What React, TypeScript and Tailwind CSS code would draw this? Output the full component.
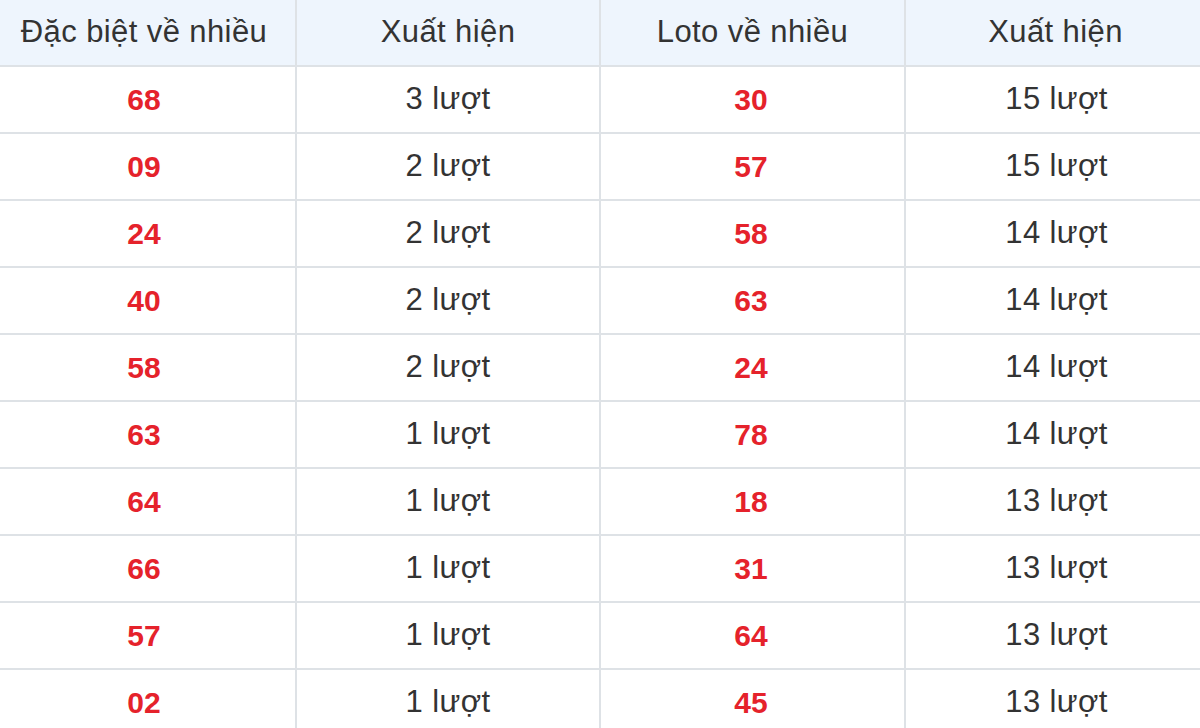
import React from "react";

const rows: [string, string, string, string][] = [
  ["68", "3 lượt", "30", "15 lượt"],
  ["09", "2 lượt", "57", "15 lượt"],
  ["24", "2 lượt", "58", "14 lượt"],
  ["40", "2 lượt", "63", "14 lượt"],
  ["58", "2 lượt", "24", "14 lượt"],
  ["63", "1 lượt", "78", "14 lượt"],
  ["64", "1 lượt", "18", "13 lượt"],
  ["66", "1 lượt", "31", "13 lượt"],
  ["57", "1 lượt", "64", "13 lượt"],
  ["02", "1 lượt", "45", "13 lượt"],
];

export default function App() {
  return (
    <div className="w-[1200px] h-[728px] overflow-hidden bg-white" style={{ fontFamily: '"Liberation Sans", Arial, sans-serif' }}>
      <table className="border-collapse w-[1200px] table-fixed">
        <colgroup>
          <col className="w-[296px]" />
          <col className="w-[304px]" />
          <col className="w-[305px]" />
          <col className="w-[295px]" />
        </colgroup>
        <thead>
          <tr className="bg-[#eef5fd] h-[66px]">
            <th className="border-2 border-t-0 border-l-0 border-[#dee2e6] text-[31px] tracking-[0.4px] font-normal text-[#333333] text-center p-0 pr-[7px]">Đặc biệt về nhiều</th>
            <th className="border-2 border-t-0 border-[#dee2e6] text-[31px] tracking-[0.4px] font-normal text-[#333333] text-center p-0">Xuất hiện</th>
            <th className="border-2 border-t-0 border-[#dee2e6] text-[31px] tracking-[0.4px] font-normal text-[#333333] text-center p-0">Loto về nhiều</th>
            <th className="border-2 border-t-0 border-r-0 border-[#dee2e6] text-[31px] tracking-[0.4px] font-normal text-[#333333] text-center p-0 pl-[5px]">Xuất hiện</th>
          </tr>
        </thead>
        <tbody>
          {rows.map((r, i) => (
            <tr key={i} className="h-[67px]">
              <td className="border-2 border-l-0 border-[#dee2e6] text-center text-[30px] font-bold text-[#e5222b] p-0 pr-[7px]">{r[0]}</td>
              <td className="border-2 border-[#dee2e6] text-center text-[31px] tracking-[0.4px] text-[#333333] p-0">{r[1]}</td>
              <td className="border-2 border-[#dee2e6] text-center text-[30px] font-bold text-[#e5222b] p-0 pr-[3px]">{r[2]}</td>
              <td className="border-2 border-r-0 border-[#dee2e6] text-center text-[31px] tracking-[0.4px] text-[#333333] p-0 pl-[7px]">{r[3]}</td>
            </tr>
          ))}
        </tbody>
      </table>
    </div>
  );
}
